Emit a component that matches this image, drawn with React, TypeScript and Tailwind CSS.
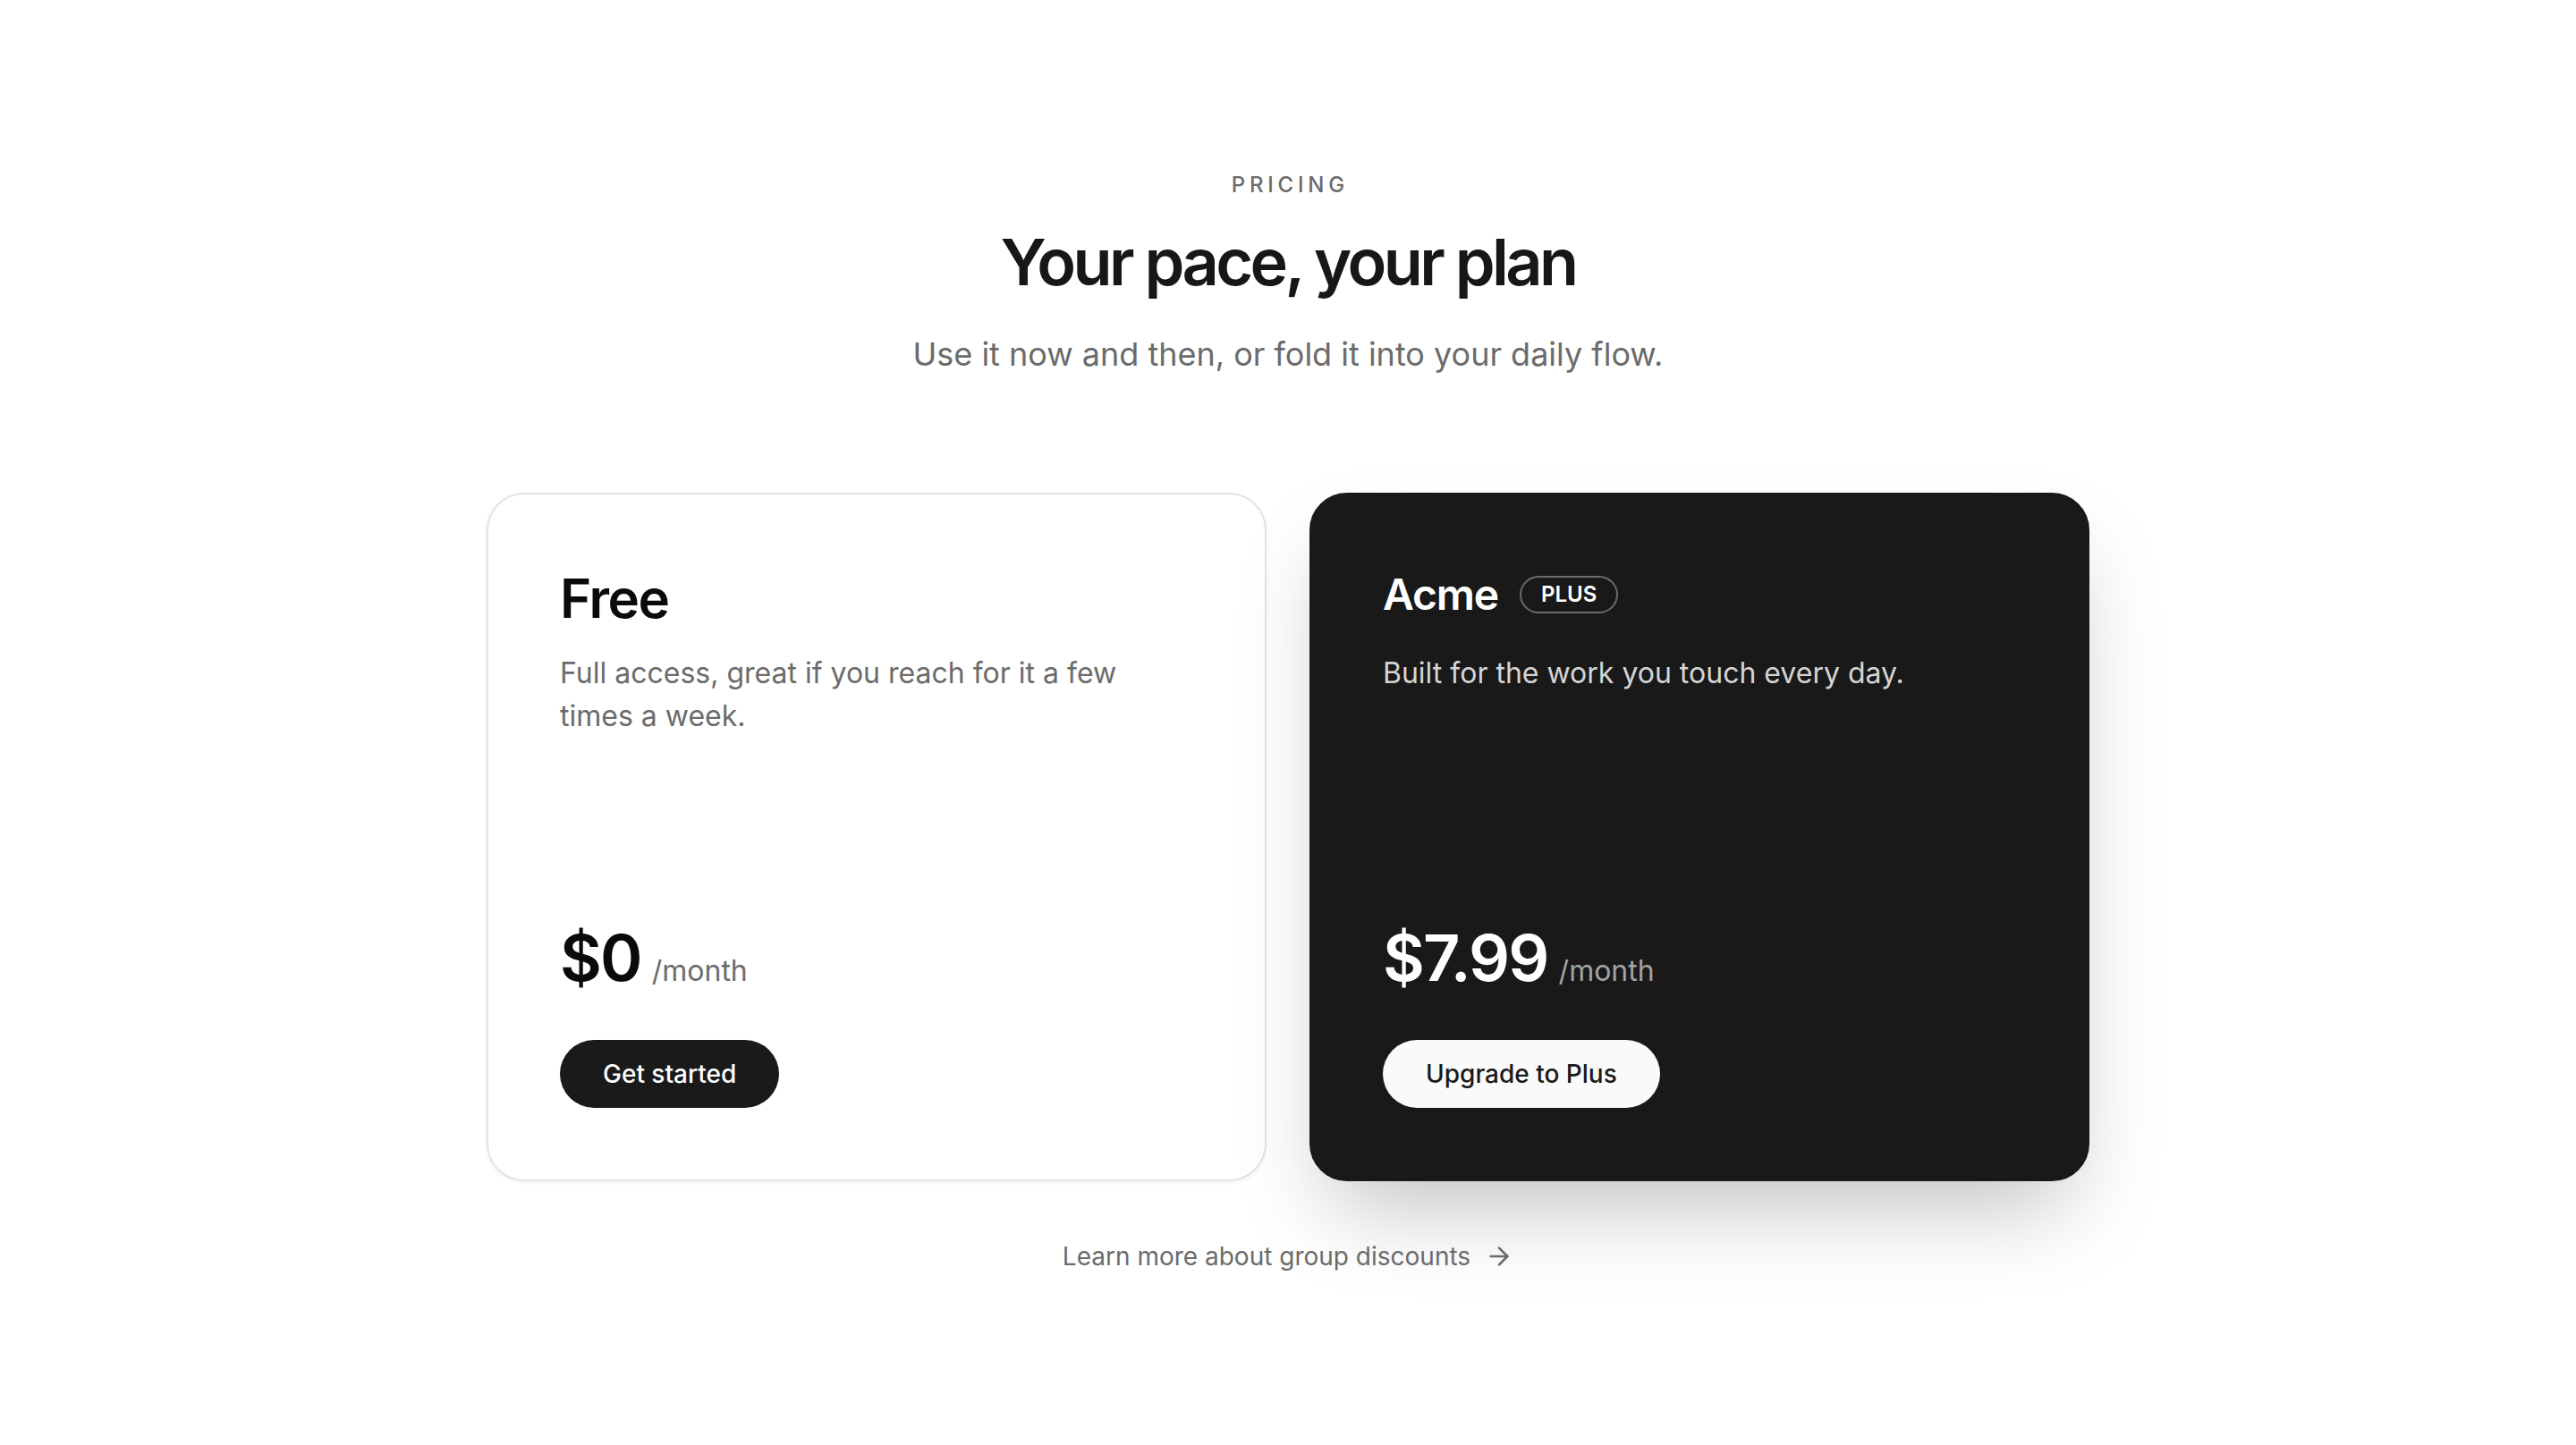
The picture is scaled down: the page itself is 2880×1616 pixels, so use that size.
import React from "react";
import { ArrowRight } from "lucide-react";

export default function App() {
  return (
    <div className="min-h-screen w-full bg-white font-['Inter',sans-serif] antialiased">
      <section className="pt-[191px] pb-[96px] px-[48px]">
        <div className="flex flex-col items-center text-center">
          <p className="text-[24px] leading-[32px] font-medium tracking-[0.2em] text-[#6b6b6b] pl-[4.8px]">
            PRICING
          </p>
          <h1 className="mt-[30px] text-[72px] leading-[80px] font-semibold tracking-[-0.05em] text-[#171717]">
            Your pace, your plan
          </h1>
          <p className="mt-[35px] text-[36px] leading-[56px] text-[#6b6b6b]">
            Use it now and then, or fold it into your daily flow.
          </p>
        </div>

        <div className="mx-auto mt-[127px] grid max-w-[1792px] grid-cols-2 gap-[48px]">
          {/* Free card */}
          <div className="flex min-h-[770px] flex-col rounded-[42px] border-2 border-[#e3e3e3] bg-white p-[80px] shadow-[0_2px_4px_rgba(0,0,0,0.05)]">
            <h2 className="text-[60px] leading-[72px] font-semibold tracking-tight text-[#0a0a0a]">
              Free
            </h2>
            <p className="mt-[24px] max-w-[640px] text-[32px] leading-[48px] text-[#6b6b6b]">
              Full access, great if you reach for it a few times a week.
            </p>
            <div className="mt-auto flex items-baseline gap-[12px]">
              <span className="text-[72px] leading-[80px] font-semibold tracking-tight text-[#0a0a0a]">
                $0
              </span>
              <span className="text-[32px] leading-[48px] text-[#6b6b6b]">/month</span>
            </div>
            <div className="mt-[52px]">
              <button className="h-[76px] rounded-full bg-[#1a1a1a] px-[48px] text-[28px] font-medium text-white">
                Get started
              </button>
            </div>
          </div>

          {/* Plus card */}
          <div className="flex min-h-[770px] flex-col rounded-[42px] border-2 border-[#191919] bg-[#191919] p-[80px] shadow-[0_50px_100px_-24px_rgba(0,0,0,0.25)]">
            <div className="flex items-center gap-[24px]">
              <h2 className="text-[48px] leading-[64px] font-semibold tracking-tight text-white">
                Acme
              </h2>
              <span className="rounded-full border-2 border-[#6b6b6b] px-[22px] py-[3px] text-[24px] leading-[32px] font-semibold text-white">
                PLUS
              </span>
            </div>
            <p className="mt-[32px] text-[32px] leading-[48px] text-[#d4d4d4]">
              Built for the work you touch every day.
            </p>
            <div className="mt-auto flex items-baseline gap-[12px]">
              <span className="text-[72px] leading-[80px] font-semibold tracking-tight text-white">
                $7.99
              </span>
              <span className="text-[32px] leading-[48px] text-[#a3a3a3]">/month</span>
            </div>
            <div className="mt-[52px]">
              <button className="h-[76px] rounded-full bg-[#fafafa] px-[48px] text-[28px] font-medium text-[#1a1a1a]">
                Upgrade to Plus
              </button>
            </div>
          </div>
        </div>

        <div className="mt-[64px] flex items-center justify-center">
          <a className="flex items-center gap-[16px] text-[28px] leading-[40px] text-[#6b6b6b]" href="#">
            Learn more about group discounts
            <ArrowRight size={32} strokeWidth={2} />
          </a>
        </div>
      </section>
    </div>
  );
}
